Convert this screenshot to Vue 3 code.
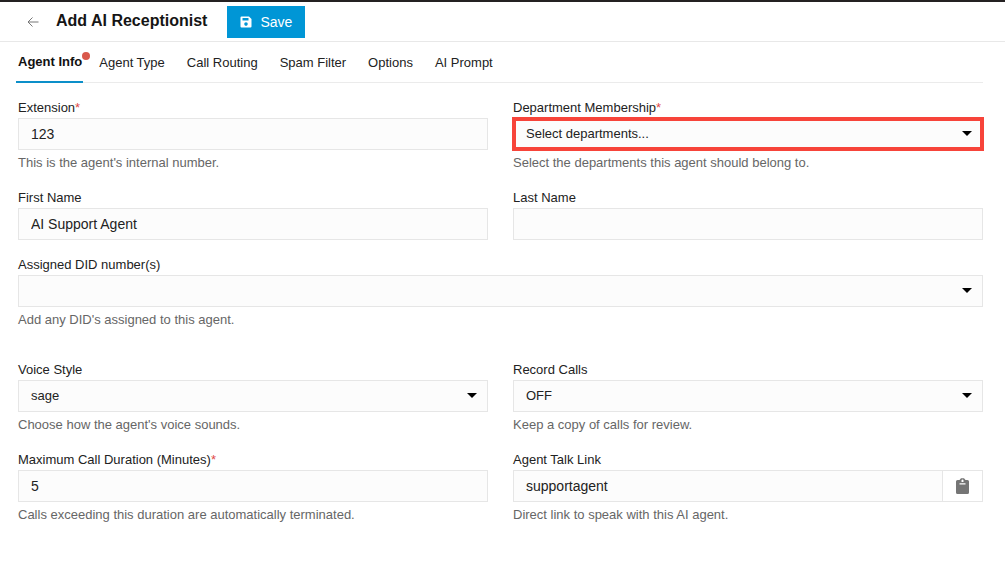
<script setup>
import { ref } from "vue";

const tabs = ['Agent Info', 'Agent Type', 'Call Routing', 'Spam Filter', 'Options', 'AI Prompt']
const activeTab = ref('Agent Info')

const form = ref({
  extension: '123',
  department: '',
  firstName: 'AI Support Agent',
  lastName: '',
  did: '',
  voice: 'sage',
  record: 'OFF',
  duration: '5',
  link: 'supportagent'
})

const copyLink = () => navigator.clipboard?.writeText(form.value.link)
</script>

<template>
  <div class="page">
    <header class="header">
      <button class="back" type="button" aria-label="Back">
        <svg width="12" height="12" viewBox="0 0 12 12" fill="none" stroke="#777" stroke-width="1">
          <path d="M11.5 6H1M5.5 1.5L1 6l4.5 4.5" />
        </svg>
      </button>
      <h1>Add AI Receptionist</h1>
      <button class="save" type="submit" form="agent-form">
        <svg width="12" height="12" viewBox="0 0 12 12">
          <path fill="#fff" fill-rule="evenodd" d="M1.5 0.5H9L11.5 3v7.5a1 1 0 0 1-1 1h-9a1 1 0 0 1-1-1v-9a1 1 0 0 1 1-1zM2.5 2v2.5h6V2zM6 6.3a1.8 1.8 0 1 0 0 3.6a1.8 1.8 0 1 0 0-3.6z" />
        </svg>
        Save
      </button>
    </header>

    <nav class="tabs">
      <button v-for="t in tabs" :key="t" type="button" :class="{ active: t === activeTab }" @click="activeTab = t">
        {{ t }}
        <span v-if="t === 'Agent Info'" class="dot"></span>
      </button>
    </nav>

    <form id="agent-form" class="form" @submit.prevent>
      <div class="field">
        <label for="extension">Extension<span class="req">*</span></label>
        <input id="extension" v-model="form.extension" type="text">
        <p>This is the agent's internal number.</p>
      </div>
      <div class="field">
        <label for="department">Department Membership<span class="req">*</span></label>
        <div class="select highlight">
          <select id="department" v-model="form.department">
            <option value="">Select departments...</option>
          </select>
        </div>
        <p>Select the departments this agent should belong to.</p>
      </div>

      <div class="field">
        <label for="first-name">First Name</label>
        <input id="first-name" v-model="form.firstName" type="text">
      </div>
      <div class="field">
        <label for="last-name">Last Name</label>
        <input id="last-name" v-model="form.lastName" type="text">
      </div>

      <div class="field wide">
        <label for="did">Assigned DID number(s)</label>
        <div class="select">
          <select id="did" v-model="form.did">
            <option value=""></option>
          </select>
        </div>
        <p>Add any DID's assigned to this agent.</p>
      </div>

      <div class="field">
        <label for="voice">Voice Style</label>
        <div class="select">
          <select id="voice" v-model="form.voice">
            <option>sage</option>
          </select>
        </div>
        <p>Choose how the agent's voice sounds.</p>
      </div>
      <div class="field">
        <label for="record">Record Calls</label>
        <div class="select">
          <select id="record" v-model="form.record">
            <option>OFF</option>
            <option>ON</option>
          </select>
        </div>
        <p>Keep a copy of calls for review.</p>
      </div>

      <div class="field">
        <label for="duration">Maximum Call Duration (Minutes)<span class="req">*</span></label>
        <input id="duration" v-model="form.duration" type="text">
        <p>Calls exceeding this duration are automatically terminated.</p>
      </div>
      <div class="field">
        <label for="link">Agent Talk Link</label>
        <div class="link-row">
          <input id="link" v-model="form.link" type="text">
          <button type="button" aria-label="Copy link" @click="copyLink">
            <svg width="16" height="18" viewBox="0 0 16 18">
              <path fill="#757575" fill-rule="evenodd" d="M2.5 3H4.5L6 1.2h3L10.5 3h2a1.5 1.500 0 0 1 1.500 1.500V15.500a1.500 1.500 0 0 1-1.500 1.500h-10A1.500 1.500 0 0 1 1 15.500V4.500A1.500 1.500 0 0 1 2.500 3zM7.500 2.400a1 1 0 0 0-1 1v1.600h2V3.400a1 1 0 0 0-1-1zM4.500 6.200v1.400h6V6.200z" />
            </svg>
          </button>
        </div>
        <p>Direct link to speak with this AI agent.</p>
      </div>
    </form>
  </div>
</template>

<style>
body {
  margin: 0;
  background: #fff;
}
</style>

<style scoped>
.page {
  border-top: 2px solid #242122;
  font-family: "Liberation Sans", Arial, sans-serif;
  font-size: 13px;
  color: #222;
}

button,
input,
select {
  font-family: inherit;
  border-radius: 0;
  box-sizing: border-box;
}

button {
  border: none;
  background: none;
  padding: 0;
  cursor: pointer;
}

svg {
  display: block;
}

.header {
  display: flex;
  align-items: center;
  height: 39px;
  padding: 0 22px 0 27px;
  border-bottom: 1px solid #e8e8e8;
}

h1 {
  margin: 0 20px 2px 17px;
  font-size: 16px;
  line-height: 36px;
  color: #151515;
}

.save {
  display: flex;
  align-items: center;
  gap: 8px;
  height: 32px;
  margin-top: 1px;
  padding: 0 13px;
  background: #0096d6;
  color: #fff;
  font-size: 14px;
}

.tabs {
  display: flex;
  gap: 22px;
  height: 40px;
  margin: 0 22px 0 18px;
  border-bottom: 1px solid #ebebeb;
}

.tabs button {
  position: relative;
  font-size: 13px;
  color: #222;
}

.tabs button.active {
  margin: 0 -6px -1px -2px;
  padding: 0 1px 0 2px;
  border-bottom: 2px solid #0c8fc9;
  color: #111;
  font-weight: bold;
}

.dot {
  position: absolute;
  top: 10px;
  right: -7px;
  width: 8px;
  height: 8px;
  border-radius: 50%;
  background: #d9584b;
}

.form {
  display: grid;
  grid-template-columns: 1fr 1fr;
  gap: 17px 25px;
  padding: 17px 22px 17px 18px;
}

.wide {
  grid-column: 1 / -1;
  margin-bottom: 15px;
}

label {
  display: block;
  margin-bottom: 2px;
  line-height: 16px;
}

.req {
  color: #e04a4a;
}

.field p {
  margin: 5px 0 2px;
  line-height: 16px;
  color: #666;
}

input,
select {
  display: block;
  width: 100%;
  height: 32px;
  padding: 0 12px;
  border: 1px solid #e6e6e6;
  background: #fcfcfc;
  color: #222;
  font-size: 14px;
}

select {
  appearance: none;
  padding-bottom: 2px;
  font-size: 13px;
}

.select {
  position: relative;
}

.select::after {
  content: "";
  position: absolute;
  top: 13px;
  right: 11px;
  border: 5px solid transparent;
  border-top-color: #000;
  border-bottom: none;
  pointer-events: none;
}

.highlight select {
  outline: 4px solid #f7443a;
  outline-offset: -3px;
}

.link-row {
  display: flex;
}

.link-row button {
  flex: 0 0 40px;
  display: flex;
  align-items: center;
  justify-content: center;
  border: 1px solid #e6e6e6;
  border-left: none;
}
</style>
